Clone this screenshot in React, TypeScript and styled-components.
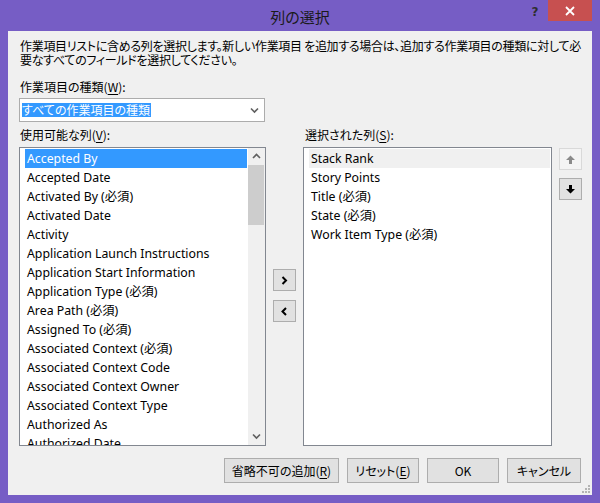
import styled, { createGlobalStyle } from "styled-components";
import { FC } from "react";

const jpFont = `"Noto Sans CJK JP", sans-serif`;
const uiFont = `"Noto Sans", "Noto Sans CJK JP", sans-serif`;

const GlobalStyle = createGlobalStyle`
    html, body {
        margin: 0;
        padding: 0;
        background: #765dc5;
    }
    * {
        box-sizing: border-box;
    }
`;

const Window = styled.div`
    width: 600px;
    height: 503px;
    background: #765dc5;
    display: flex;
    flex-direction: column;
    padding: 0 8px 8px;
`;

const TitleBar = styled.div`
    height: 31px;
    display: flex;
    align-items: flex-start;
    margin: 0 -8px;
    padding-right: 8px;
`;

const Title = styled.div`
    flex: 1;
    height: 31px;
    line-height: 33px;
    text-align: center;
    font-family: ${jpFont};
    font-feature-settings: "palt";
    font-size: 15px;
    color: #1a1a1a;
    padding-left: 78px;
`;

const HelpButton = styled.div`
    width: 26px;
    height: 20px;
    line-height: 24px;
    text-align: center;
    font-family: "DejaVu Sans", sans-serif;
    font-weight: bold;
    font-size: 12px;
    color: #2e2e2e;
`;

const CloseButton = styled.div`
    width: 44px;
    height: 21px;
    background: #c75050;
    display: flex;
    align-items: center;
    justify-content: center;
`;

const Client = styled.div`
    flex: 1;
    position: relative;
    background: #f0f0f0;
    padding: 8px 10px 0 11px;
    display: flex;
    flex-direction: column;
    font-family: ${jpFont};
    font-feature-settings: "palt";
    font-size: 12px;
    color: #000;
`;

const Description = styled.p`
    margin: 0 0 13px;
    line-height: 14px;
    white-space: nowrap;
    padding-left: 1px;
    letter-spacing: -0.3px;
`;

const Label = styled.div<{ $indent?: number }>`
    height: 14px;
    line-height: 14px;
    padding-left: ${(p) => p.$indent ?? 1}px;
    u {
        text-decoration-thickness: 1px;
        text-underline-offset: 2px;
    }
`;

const Combo = styled.div`
    margin-top: 4px;
    width: 246px;
    height: 24px;
    border: 1px solid #acacac;
    background: #fff;
    display: flex;
    align-items: center;
    padding: 0 0 0 2px;
`;

const ComboText = styled.span`
    flex: 0 0 auto;
    background: #3399ff;
    color: #fff;
    height: 14px;
    line-height: 14px;
    padding-right: 1px;
`;

const ComboArrow = styled.div`
    margin-left: auto;
    width: 20px;
    display: flex;
    justify-content: center;
`;

const Columns = styled.div`
    display: grid;
    grid-template-columns: 247px 23px 249px 23px;
    column-gap: 7px;
`;

const LabelRow = styled(Columns)`
    margin-top: 6px;
`;

const ListRow = styled(Columns)`
    margin-top: 5px;
    height: 299px;
`;

const ListBox = styled.div<{ $scroll?: boolean }>`
    border: 1px solid #828790;
    background: #fff;
    display: flex;
    overflow: hidden;
    padding: 1px ${(p) => (p.$scroll ? 0 : 1)}px 0 5px;
`;

const Items = styled.div`
    flex: 1;
    overflow: hidden;
`;

const Item = styled.div<{ $selected?: "active" | "inactive" }>`
    height: 19px;
    line-height: 19px;
    padding-left: 2px;
    font-family: ${uiFont};
    font-feature-settings: normal;
    font-size: 12.3px;
    white-space: nowrap;
    color: ${(p) => (p.$selected === "active" ? "#fff" : "#000")};
    background: ${(p) =>
        p.$selected === "active" ? "#3399ff" : p.$selected === "inactive" ? "#f0f0f0" : "transparent"};
`;

const ScrollBar = styled.div`
    width: 17px;
    margin-top: -1px;
    margin-left: 1px;
    background: #f0f0f0;
    display: flex;
    flex-direction: column;
`;

const ScrollArrow = styled.div`
    height: 17px;
    display: flex;
    align-items: center;
    justify-content: center;
`;

const Thumb = styled.div`
    height: 60px;
    margin: 0 1px 0 0;
    background: #cdcdcd;
`;

const ScrollSpace = styled.div`
    flex: 1;
`;

const MoveButtons = styled.div`
    display: flex;
    flex-direction: column;
    justify-content: center;
    gap: 9px;
    padding-bottom: 2px;
`;

const OrderButtons = styled.div`
    display: flex;
    flex-direction: column;
    gap: 8px;
    padding-top: 1px;
`;

const SquareButton = styled.div<{ $disabled?: boolean }>`
    width: 23px;
    height: 22px;
    border: 1px solid ${(p) => (p.$disabled ? "#d9d9d9" : "#adadad")};
    background: ${(p) => (p.$disabled ? "#f4f4f4" : "#e1e1e1")};
    display: flex;
    align-items: center;
    justify-content: center;
`;

const ButtonRow = styled.div`
    margin-top: 12px;
    display: flex;
    justify-content: flex-end;
    gap: 8px;
    padding-right: 1px;
`;

const Button = styled.div<{ $width: number }>`
    width: ${(p) => p.$width}px;
    height: 25px;
    border: 1px solid #adadad;
    background: #e1e1e1;
    display: flex;
    align-items: center;
    justify-content: center;
    line-height: 14px;
    u {
        text-decoration-thickness: 1px;
        text-underline-offset: 2px;
    }
`;

const Grip = styled.svg`
    position: absolute;
    right: 2px;
    bottom: 2px;
`;

const Chevron: FC<{ dir: "up" | "down" | "left" | "right"; color?: string; bold?: boolean }> = ({
    dir,
    color = "#606060",
    bold,
}) => {
    const paths = {
        up: "M1 5 L4.5 1.5 L8 5",
        down: "M1 1.5 L4.5 5 L8 1.5",
        left: "M5 1 L1.5 4.5 L5 8",
        right: "M1.5 1 L5 4.5 L1.5 8",
    };
    const horiz = dir === "up" || dir === "down";
    return (
        <svg width={horiz ? 9 : 7} height={horiz ? 7 : 9} viewBox={horiz ? "0 0 9 7" : "0 0 7 9"}>
            <path d={paths[dir]} fill="none" stroke={color} strokeWidth={bold ? 2 : 1.6} />
        </svg>
    );
};

const BlockArrow: FC<{ dir: "up" | "down"; color: string }> = ({ dir, color }) => (
    <svg width="9" height="9" viewBox="0 0 9 9">
        <path
            d={dir === "up" ? "M4.5 0.5 L9 5 L6 5 L6 9 L3 9 L3 5 L0 5 Z" : "M4.5 8.5 L9 4 L6 4 L6 0 L3 0 L3 4 L0 4 Z"}
            fill={color}
        />
    </svg>
);

const available = [
    "Accepted By",
    "Accepted Date",
    "Activated By (必須)",
    "Activated Date",
    "Activity",
    "Application Launch Instructions",
    "Application Start Information",
    "Application Type (必須)",
    "Area Path (必須)",
    "Assigned To (必須)",
    "Associated Context (必須)",
    "Associated Context Code",
    "Associated Context Owner",
    "Associated Context Type",
    "Authorized As",
    "Authorized Date",
];

const selected = ["Stack Rank", "Story Points", "Title (必須)", "State (必須)", "Work Item Type (必須)"];

const App: FC = () => {
    return (
        <>
            <GlobalStyle />
            <Window>
                <TitleBar>
                    <Title>列の選択</Title>
                    <HelpButton>?</HelpButton>
                    <CloseButton>
                        <svg width="10" height="10" viewBox="0 0 10 10">
                            <path d="M1 1 L9 9 M9 1 L1 9" stroke="#fff" strokeWidth="1.8" />
                        </svg>
                    </CloseButton>
                </TitleBar>
                <Client>
                    <Description>
                        作業項目リストに含める列を選択します。新しい作業項目 を追加する場合は、追加する作業項目の種類に対して必
                        <br />
                        要なすべてのフィールドを選択してください。
                    </Description>
                    <Label>
                        作業項目の種類(<u>W</u>):
                    </Label>
                    <Combo>
                        <ComboText>すべての作業項目の種類</ComboText>
                        <ComboArrow>
                            <Chevron dir="down" />
                        </ComboArrow>
                    </Combo>
                    <LabelRow>
                        <Label>
                            使用可能な列(<u>V</u>):
                        </Label>
                        <span />
                        <Label $indent={2}>
                            選択された列(<u>S</u>):
                        </Label>
                    </LabelRow>
                    <ListRow>
                        <ListBox $scroll>
                            <Items>
                                {available.map((name, i) => (
                                    <Item key={name} $selected={i === 0 ? "active" : undefined}>
                                        {name}
                                    </Item>
                                ))}
                            </Items>
                            <ScrollBar>
                                <ScrollArrow>
                                    <Chevron dir="up" />
                                </ScrollArrow>
                                <Thumb />
                                <ScrollSpace />
                                <ScrollArrow>
                                    <Chevron dir="down" />
                                </ScrollArrow>
                            </ScrollBar>
                        </ListBox>
                        <MoveButtons>
                            <SquareButton>
                                <Chevron dir="right" color="#000" bold />
                            </SquareButton>
                            <SquareButton>
                                <Chevron dir="left" color="#000" bold />
                            </SquareButton>
                        </MoveButtons>
                        <ListBox>
                            <Items>
                                {selected.map((name, i) => (
                                    <Item key={name} $selected={i === 0 ? "inactive" : undefined}>
                                        {name}
                                    </Item>
                                ))}
                            </Items>
                        </ListBox>
                        <OrderButtons>
                            <SquareButton $disabled>
                                <BlockArrow dir="up" color="#8a8a8a" />
                            </SquareButton>
                            <SquareButton>
                                <BlockArrow dir="down" color="#000" />
                            </SquareButton>
                        </OrderButtons>
                    </ListRow>
                    <ButtonRow>
                        <Button $width={115}>
                            省略不可の追加(<u>R</u>)
                        </Button>
                        <Button $width={72}>
                            リセット(<u>E</u>)
                        </Button>
                        <Button $width={72}>OK</Button>
                        <Button $width={74}>キャンセル</Button>
                    </ButtonRow>
                    <Grip width="10" height="10" viewBox="0 0 10 10">
                        {[
                            [8, 2],
                            [5, 5],
                            [8, 5],
                            [2, 8],
                            [5, 8],
                            [8, 8],
                        ].map(([x, y]) => (
                            <rect key={`${x}-${y}`} x={x} y={y} width="2" height="2" fill="#b4b4b4" />
                        ))}
                    </Grip>
                </Client>
            </Window>
        </>
    );
};

export default App;
